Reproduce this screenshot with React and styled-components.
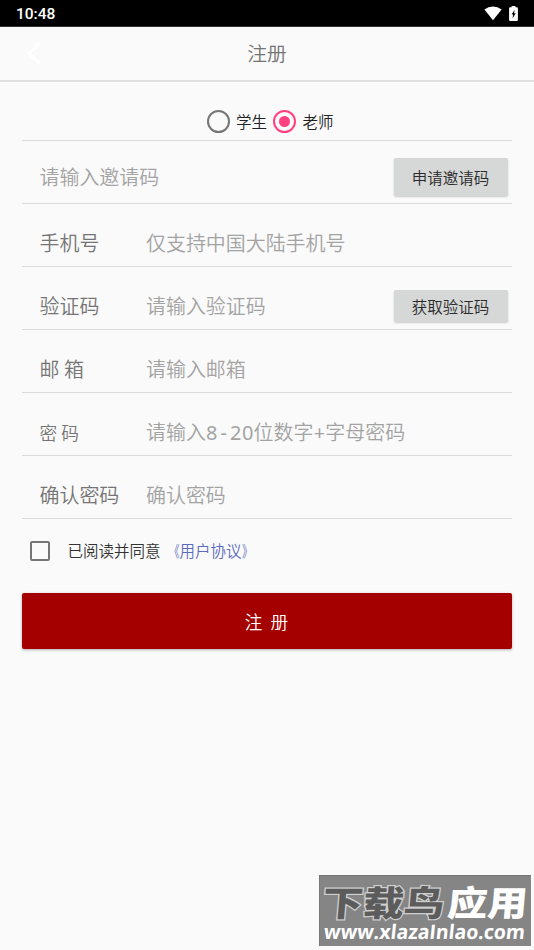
import { useState } from 'react';
import styled, { createGlobalStyle } from 'styled-components';

const App = () => {
  const [role, setRole] = useState('teacher');
  const [accepted, setAccepted] = useState(false);

  return (
    <Screen>
      <GlobalStyle />
      <StatusBar>
        <Clock>10:48</Clock>
        <StatusIcons>
          <svg width="18" height="15" viewBox="0 0 18 15">
            <path d="M9 14.2 L0.4 3.5 Q4.2 0.4 9 0.4 Q13.8 0.4 17.6 3.5 Z" fill="#fff" />
          </svg>
          <svg width="9" height="15" viewBox="0 0 9 15">
            <path d="M2.6 0h3.8v1.2h1.5q1 0 1 1v11.8q0 1-1 1H1.1q-1 0-1-1V2.2q0-1 1-1h1.5z" fill="#fff" />
            <path d="M5.7 3.8 L2.6 8.5 H4.2 L3.5 12.5 L6.7 7.3 H5 Z" fill="#000" />
          </svg>
        </StatusIcons>
      </StatusBar>

      <Header>
        <BackButton aria-label="返回">
          <svg width="16" height="26" viewBox="0 0 16 26">
            <path d="M14 2.9 L3.4 13.4 L14 24" fill="none" stroke="#fff" strokeWidth="3.4" />
          </svg>
        </BackButton>
        <Title>注册</Title>
      </Header>

      <Form>
        <RoleRow>
          <RoleOption onClick={() => setRole('student')}>
            <Radio $checked={role === 'student'} />
            学生
          </RoleOption>
          <RoleOption onClick={() => setRole('teacher')}>
            <Radio $checked={role === 'teacher'} />
            老师
          </RoleOption>
        </RoleRow>

        <Row $offset={9}>
          <Hint>请输入邀请码</Hint>
          <SmallButton $height={38}>申请邀请码</SmallButton>
        </Row>
        <Row>
          <Label>手机号</Label>
          <Hint>仅支持中国大陆手机号</Hint>
        </Row>
        <Row>
          <Label>验证码</Label>
          <Hint>请输入验证码</Hint>
          <SmallButton $height={32}>获取验证码</SmallButton>
        </Row>
        <Row>
          <Label>邮 箱</Label>
          <Hint>请输入邮箱</Hint>
        </Row>
        <Row>
          <Label $size={17.7}>密 码</Label>
          <Hint>
            请输入<Mono>8</Mono><Mono>-</Mono><Mono>2</Mono><Mono>0</Mono>位数字<Mono>+</Mono>字母密码
          </Hint>
        </Row>
        <Row>
          <Label>确认密码</Label>
          <Hint>确认密码</Hint>
        </Row>

        <Agreement>
          <Checkbox $checked={accepted} onClick={() => setAccepted(!accepted)} />
          <span>已阅读并同意</span>
          <AgreementLink>
            <Bracket $side="right">《</Bracket>
            用户协议
            <Bracket $side="left">》</Bracket>
          </AgreementLink>
        </Agreement>

        <SubmitButton>注&nbsp; 册</SubmitButton>
      </Form>

      <Watermark>
        <svg width="211" height="70" viewBox="0 0 211 70">
          <g fontFamily="'Noto Sans CJK SC', sans-serif" fontSize="35" transform="skewX(-5)">
            <text
              x="5"
              y="40"
              textLength="122"
              lengthAdjust="spacingAndGlyphs"
              fontWeight="900"
              fill="#5c5c5c"
              stroke="#cfcfcf"
              strokeWidth="2.4"
              paintOrder="stroke"
            >
              下载鸟
            </text>
            <text
              x="130"
              y="40"
              textLength="80"
              lengthAdjust="spacingAndGlyphs"
              fontWeight="900"
              fill="#fff"
            >
              应用
            </text>
          </g>
          <text
            x="5"
            y="63"
            textLength="201"
            lengthAdjust="spacingAndGlyphs"
            fontFamily="'Open Sans', sans-serif"
            fontWeight="700"
            fontSize="20"
            fill="#fff"
            transform="translate(5 0) skewX(-6)"
          >
            www.xlazaInlao.com
          </text>
        </svg>
      </Watermark>
    </Screen>
  );
};

export default App;

// Styled Components
const GlobalStyle = createGlobalStyle`
  * {
    box-sizing: border-box;
  }

  body {
    margin: 0;
    background: #fafafa;
    font-family: 'Noto Sans CJK SC', sans-serif;
    font-weight: 350;
  }

  button {
    border: none;
    padding: 0;
    font-family: inherit;
    font-weight: inherit;
  }
`;

const Screen = styled.div`
  position: relative;
  height: 950px;
  overflow: hidden;
  background: #fafafa;
`;

const StatusBar = styled.div`
  display: flex;
  align-items: center;
  justify-content: space-between;
  height: 27px;
  padding: 0 16px 0 16px;
  background: #000;
  border-bottom: 1px solid #333;
`;

const Clock = styled.span`
  color: #fff;
  font-family: Roboto, sans-serif;
  font-size: 15.5px;
  font-weight: 500;
  padding-top: 2px;
`;

const StatusIcons = styled.div`
  display: flex;
  gap: 7px;
`;

const Header = styled.header`
  display: grid;
  grid-template-columns: 60px 1fr 60px;
  align-items: center;
  height: 55px;
  padding-bottom: 2px;
  border-bottom: 2px solid #e0e0e0;
`;

const BackButton = styled.button`
  display: flex;
  width: 16px;
  margin-left: 26px;
  background: none;
`;

const Title = styled.h1`
  margin: 0;
  color: #757575;
  font-size: 19.8px;
  font-weight: 350;
  line-height: 28px;
  text-align: center;
`;

const Form = styled.main`
  padding: 0 22px;
`;

const RoleRow = styled.div`
  display: flex;
  gap: 6px;
  height: 59px;
  padding: 19px 0 0 184.5px;
  border-bottom: 1px solid #dadada;
`;

const RoleOption = styled.label`
  display: flex;
  align-items: center;
  gap: 6.5px;
  height: 42px;
  margin-top: -1px;
  color: #222;
  font-size: 15.5px;
`;

const Radio = styled.span`
  display: flex;
  align-items: center;
  justify-content: center;
  width: 23px;
  height: 23px;
  border: 2px solid ${({ $checked }) => ($checked ? '#ff4081' : '#757575')};
  border-radius: 50%;

  &::after {
    content: '';
    width: 11px;
    height: 11px;
    border-radius: 50%;
    background: ${({ $checked }) => ($checked ? '#ff4081' : 'transparent')};
  }
`;

const Row = styled.div`
  display: flex;
  align-items: center;
  height: 63px;
  padding: ${({ $offset }) => $offset || 15}px 4px 0 17.5px;
  border-bottom: 1px solid #dadada;
`;

const Label = styled.span`
  width: 106.5px;
  color: #757575;
  font-size: ${({ $size }) => $size || 19.95}px;
  white-space: nowrap;
`;

const Hint = styled.span`
  flex: 1;
  color: #a3a3a3;
  font-size: 19.95px;
  white-space: nowrap;
`;

const Mono = styled.span`
  display: inline-block;
  width: 11.95px;
  font-family: 'Noto Sans', sans-serif;
  font-weight: 400;
  line-height: 1;
  text-align: center;
`;

const SmallButton = styled.button`
  width: 114px;
  height: ${({ $height }) => $height}px;
  padding-right: 1px;
  border-radius: 2px;
  background: #d6d7d7;
  box-shadow: 0 1px 2px rgba(0, 0, 0, 0.2);
  color: #2a2a2a;
  font-size: 15.5px;
`;

const Agreement = styled.div`
  display: flex;
  align-items: center;
  height: 63px;
  padding-left: 8px;
  color: #333;
  font-size: 15.5px;
  line-height: 21px;
`;

const Checkbox = styled.span`
  width: 20px;
  height: 20px;
  margin-right: 17.5px;
  border: 2px solid #757575;
  border-radius: 2px;
  background: ${({ $checked }) => ($checked ? '#ff4081' : 'transparent')};
`;

const AgreementLink = styled.a`
  display: flex;
  margin-left: 3.5px;
  color: #5c6bc0;
`;

// The CJK brackets are squeezed towards the name they enclose
const Bracket = styled.span`
  transform: scaleX(0.68);
  transform-origin: ${({ $side }) => $side} center;
`;

const SubmitButton = styled.button`
  width: 100%;
  height: 56px;
  margin-top: 11px;
  padding: 0 1px 1px 0;
  border-radius: 2px;
  background: #a40000;
  box-shadow: 0 1px 3px rgba(0, 0, 0, 0.3);
  color: #fff;
  font-size: 17.7px;
  white-space: pre;
`;

const Watermark = styled.div`
  position: absolute;
  left: 319px;
  top: 875px;
  width: 212px;
  height: 71px;
  border: solid #777;
  border-width: 1px 0 0 1px;
  background: #858585;
`;
